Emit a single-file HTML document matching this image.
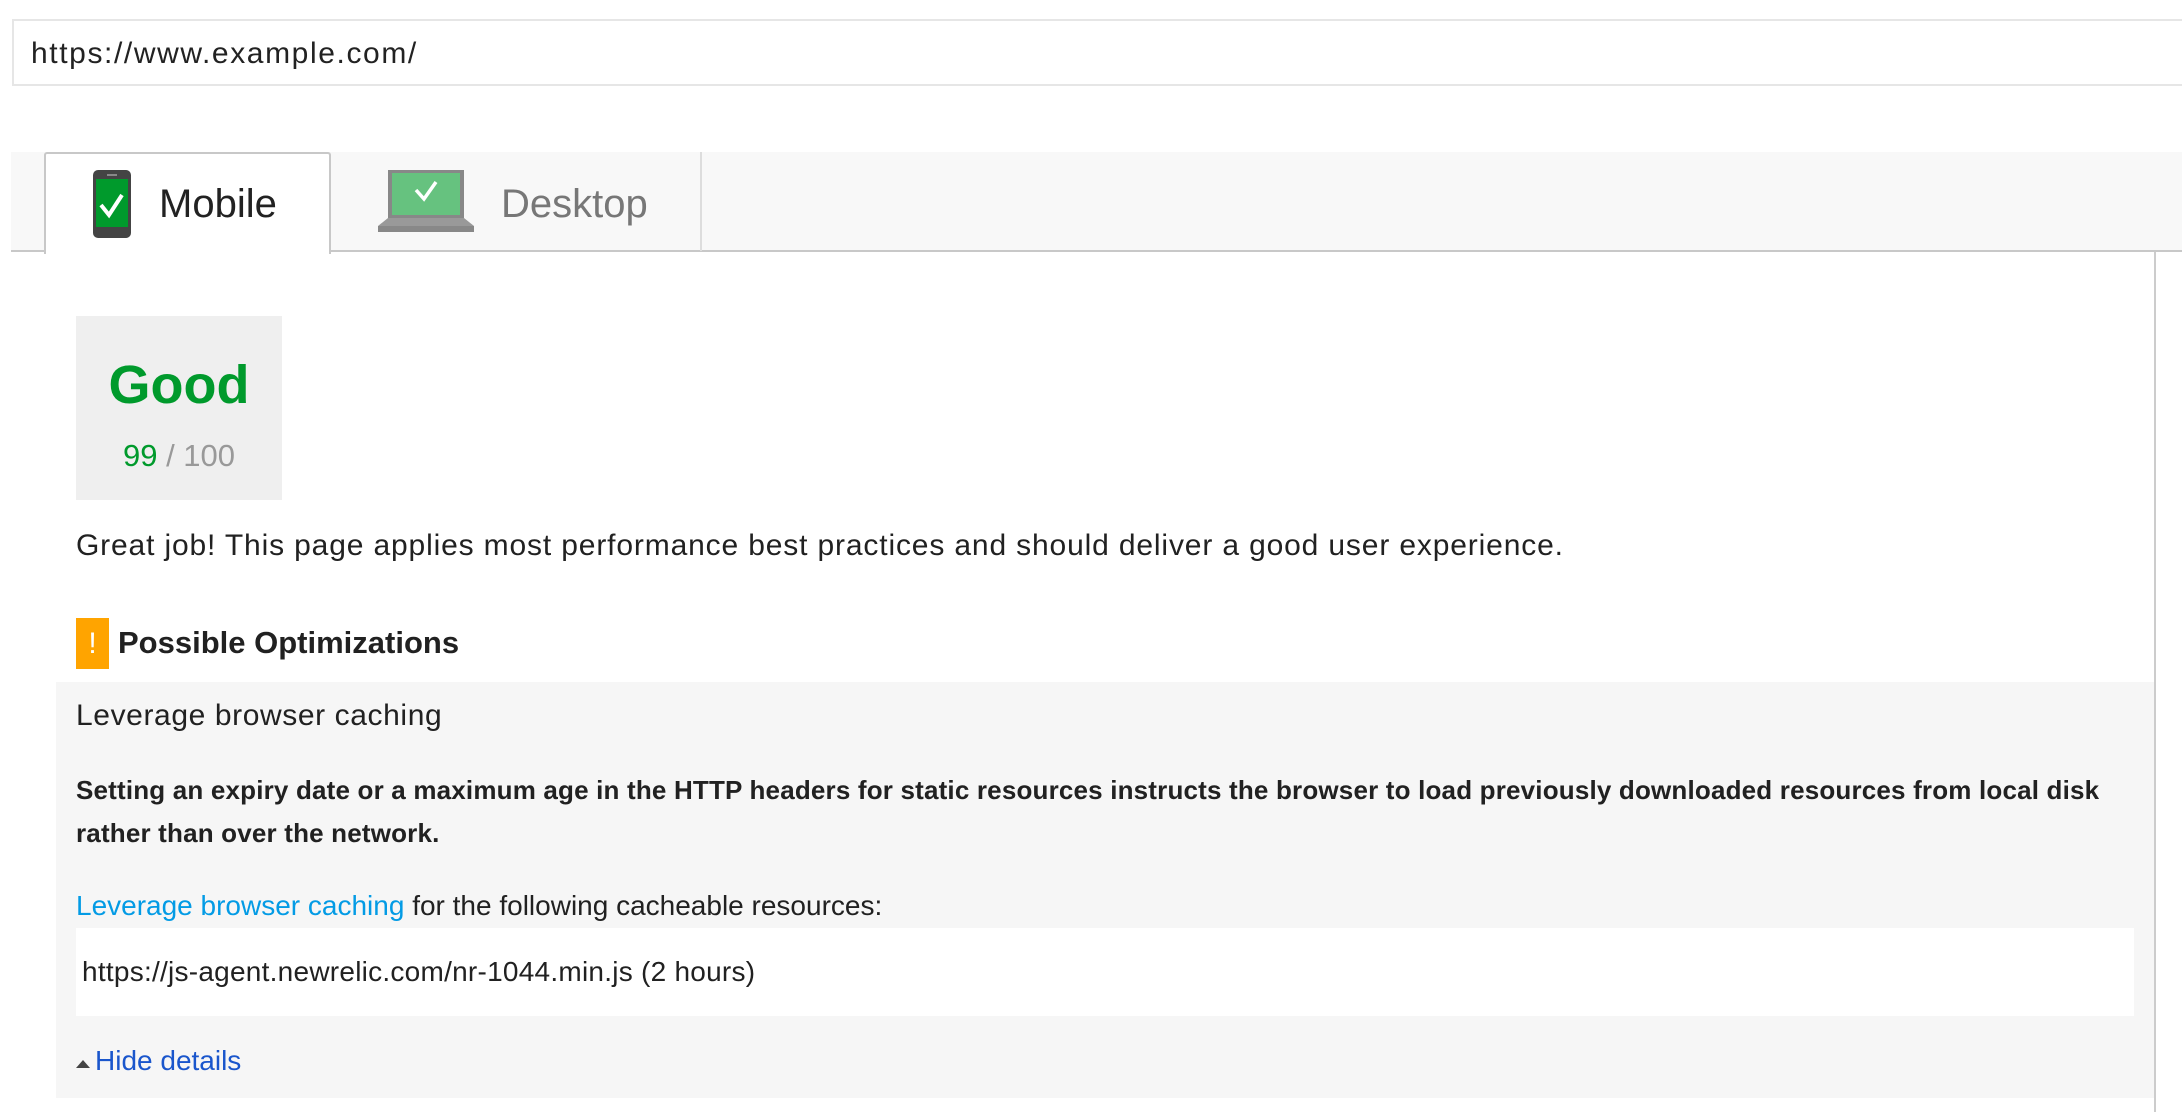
<!DOCTYPE html>
<html><head><meta charset="utf-8"><style>
*{margin:0;padding:0;box-sizing:border-box}
body{width:2182px;height:1112px;background:#fff;font-family:"Liberation Sans",sans-serif;color:#212121;position:relative;overflow:hidden}
.a{position:absolute;white-space:nowrap}
</style></head><body>
<div class="a" style="left:12px;top:19px;width:2200px;height:67px;border:2px solid #e6e6e6;"></div>
<div class="a" style="left:31px;top:36px;font-size:30px;letter-spacing:1.6px;line-height:36px;color:#222">https://www.example.com/</div>

<div class="a" style="left:11px;top:152px;width:2171px;height:100px;background:#f8f8f8;border-bottom:2px solid #c8c8c8"></div>
<div class="a" style="left:44px;top:152px;width:287px;height:102px;background:#fff;border:2px solid #c8c8c8;border-bottom:none;border-radius:3px 3px 0 0"></div>
<div class="a" style="left:700px;top:152px;width:2px;height:99px;background:#ddd"></div>
<div class="a" style="left:2154px;top:252px;width:2px;height:860px;background:#ccc"></div>

<svg class="a" style="left:93px;top:170px" width="38" height="68" viewBox="0 0 38 68">
<rect x="0" y="0" width="38" height="68" rx="5" fill="#444"/>
<rect x="3" y="9" width="32" height="48" fill="#009a2c"/>
<rect x="14" y="4" width="10" height="2" fill="#888"/>
<path d="M8 35 L16 45 L29 25" stroke="#fff" stroke-width="4" fill="none"/>
</svg>
<div class="a" style="left:159px;top:179px;font-size:40px;line-height:50px;color:#222">Mobile</div>

<svg class="a" style="left:378px;top:170px" width="96" height="62" viewBox="0 0 96 62">
<rect x="10" y="0" width="76" height="48" fill="#888"/>
<rect x="14" y="3" width="68" height="42" fill="#66c27f"/>
<path d="M38 20 L46 29 L58 12" stroke="#fff" stroke-width="3.5" fill="none"/>
<path d="M10 48 L86 48 L96 56 L0 56 Z" fill="#999"/>
<rect x="0" y="56" width="96" height="6" fill="#888"/>
</svg>
<div class="a" style="left:501px;top:179px;font-size:40px;line-height:50px;color:#777">Desktop</div>

<div class="a" style="left:76px;top:316px;width:206px;height:184px;background:#efefef"></div>
<div class="a" style="left:76px;top:347px;width:206px;text-align:center;font-size:54px;font-weight:bold;line-height:76px;color:#009a2c">Good</div>
<div class="a" style="left:76px;top:437px;width:206px;text-align:center;font-size:31px;line-height:38px;color:#999"><span style="color:#009a2c">99</span> / 100</div>

<div class="a" style="left:76px;top:526px;font-size:30px;letter-spacing:0.85px;line-height:40px;color:#212121">Great job! This page applies most performance best practices and should deliver a good user experience.</div>

<div class="a" style="left:76px;top:618px;width:33px;height:51px;background:#ffa400;color:#fff;font-size:30px;text-align:center;line-height:51px">!</div>
<div class="a" style="left:118px;top:623px;font-size:31px;font-weight:bold;line-height:40px;color:#212121">Possible Optimizations</div>

<div class="a" style="left:56px;top:682px;width:2098px;height:416px;background:#f6f6f6"></div>
<div class="a" style="left:76px;top:696px;font-size:30px;letter-spacing:0.6px;line-height:40px;color:#212121">Leverage browser caching</div>
<div class="a" style="left:76px;top:769px;font-size:26px;letter-spacing:0.18px;font-weight:bold;line-height:43px;color:#212121">Setting an expiry date or a maximum age in the HTTP headers for static resources instructs the browser to load previously downloaded resources from local disk<br>rather than over the network.</div>
<div class="a" style="left:76px;top:888px;font-size:28px;line-height:36px;color:#212121"><span style="color:#039be5">Leverage browser caching</span> for the following cacheable resources:</div>
<div class="a" style="left:76px;top:928px;width:2058px;height:88px;background:#fff"></div>
<div class="a" style="left:82px;top:954px;font-size:28px;letter-spacing:0.25px;line-height:36px;color:#212121">https://js-agent.newrelic.com/nr-1044.min.js (2 hours)</div>
<div class="a" style="left:76px;top:1060px;width:0;height:0;border-left:7px solid transparent;border-right:7px solid transparent;border-bottom:8px solid #444"></div>
<div class="a" style="left:95px;top:1043px;font-size:28px;line-height:36px;color:#1a56cc">Hide details</div>
</body></html>
